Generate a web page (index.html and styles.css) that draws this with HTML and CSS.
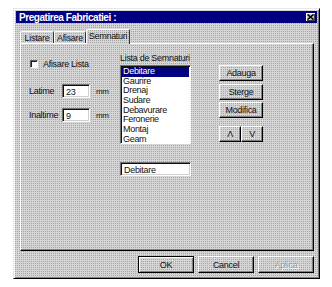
FILE: index.html
```html
<!DOCTYPE html>
<html>
<head>
<meta charset="utf-8">
<link rel="stylesheet" href="styles.css">
</head>
<body>
<div class="dialog">
  <div class="titlebar">
    <span class="title">Pregatirea Fabricatiei :</span>
    <span class="close"><svg width="7" height="6" viewBox="0 0 7 6"><path d="M0.5 0.5 L6.5 5.5 M6.5 0.5 L0.5 5.5" stroke="#000" stroke-width="1.6"/></svg></span>
  </div>
  <div class="tabs">
    <div class="tab t1">Listare</div>
    <div class="tab t2">Afisare</div>
    <div class="tab active">Semnaturi</div>
  </div>
  <div class="panel">
    <div class="col left">
      <div class="check-row"><span class="checkbox"></span><span>Afisare Lista</span></div>
      <div class="field-row r1"><span class="lbl">Latime</span><span class="input small">23</span><span class="unit">mm</span></div>
      <div class="field-row r2"><span class="lbl">Inaltime</span><span class="input small">9</span><span class="unit">mm</span></div>
    </div>
    <div class="col mid">
      <div class="list-label">Lista de Semnaturi</div>
      <div class="listbox">
        <div class="item selected">Debitare</div>
        <div class="item">Gaurire</div>
        <div class="item">Drenaj</div>
        <div class="item">Sudare</div>
        <div class="item">Debavurare</div>
        <div class="item">Feronerie</div>
        <div class="item">Montaj</div>
        <div class="item">Geam</div>
      </div>
      <div class="input wide">Debitare</div>
    </div>
    <div class="col right">
      <div class="btn side">Adauga</div>
      <div class="btn side">Sterge</div>
      <div class="btn side">Modifica</div>
      <div class="arrows">
        <div class="btn arrow">&#923;</div>
        <div class="btn arrow">V</div>
      </div>
    </div>
  </div>
  <div class="buttons">
    <div class="btn main">OK</div>
    <div class="btn main">Cancel</div>
    <div class="btn main disabled">Aplica</div>
  </div>
</div>
</body>
</html>
```
FILE: styles.css
```css
body {
  margin: 0;
  background: #fff;
  font-family: "Liberation Sans", Arial, sans-serif;
  font-size: 9px;
  letter-spacing: -0.3px;
  color: #111;
}

.dialog {
  margin: 8px 0 0 13px;
  width: 307px;
  height: 271px;
  box-sizing: border-box;
  border: 1px solid;
  border-color: #e8e8e8 #000 #000 #e8e8e8;
  box-shadow: inset 1px 1px #fff, inset -1px -1px #808080;
  padding: 2px;
  background: conic-gradient(from 90deg at 1px 1px, #d6d6d6 75%, #a4a4a4 0) 0 0 / 2px 2px;
  display: flex;
  flex-direction: column;
}

.titlebar {
  height: 12px;
  background: #000080;
  display: flex;
  align-items: center;
  justify-content: space-between;
  padding: 0 2px 0 3px;
}

.title {
  color: #fff;
  font-weight: bold;
  font-size: 10px;
  letter-spacing: -0.45px;
}

.close {
  width: 9px;
  height: 8px;
  background: #c8c8c8;
  box-shadow: inset 1px 1px #fff, inset -1px -1px #404040;
  display: flex;
  align-items: center;
  justify-content: center;
}

.close svg { display: block; }

.tabs {
  display: flex;
  align-items: flex-end;
  height: 14px;
  margin: 6px 0 0 4px;
  position: relative;
  z-index: 1;
}

.tab {
  height: 12px;
  box-sizing: border-box;
  border-top: 1px solid #fff;
  border-left: 1px solid #fff;
  border-right: 1px solid #303030;
  border-radius: 2px 2px 0 0;
  display: flex;
  align-items: center;
  justify-content: center;
}

.t1 { width: 34px; }
.t2 { width: 32px; }

.tab.active {
  width: 44px;
  height: 15px;
  margin-bottom: -1px;
  background: conic-gradient(from 90deg at 1px 1px, #d6d6d6 75%, #a4a4a4 0) 0 0 / 2px 2px;
  align-items: flex-start;
  padding-top: 1px;
}

.panel {
  margin-left: 4px;
  width: 294px;
  height: 208px;
  box-sizing: border-box;
  border: 1px solid;
  border-color: #fff #000 #000 #fff;
  box-shadow: inset -1px -1px #808080;
  padding: 10px 0 0 8px;
  display: grid;
  grid-template-columns: 91px 99px 44px;
  align-items: start;
}

.col { display: flex; flex-direction: column; }

.check-row {
  margin-top: 5px;
  height: 10px;
  display: flex;
  align-items: center;
}

.checkbox {
  width: 8px;
  height: 8px;
  margin: 0 5px 0 1px;
  box-sizing: border-box;
  background: #fff;
  border: 1px solid;
  border-color: #606060 #fff #fff #606060;
  box-shadow: inset 1px 1px #202020;
}

.field-row {
  display: flex;
  align-items: center;
  height: 14px;
}

.r1 { margin-top: 15px; }
.r2 { margin-top: 10px; }

.lbl { width: 33px; }

.input {
  box-sizing: border-box;
  background: #fff;
  border: 1px solid;
  border-color: #707070 #fff #fff #707070;
  box-shadow: inset 1px 1px #101010, inset -1px -1px #d0d0d0;
  padding: 2px 0 0 3px;
  height: 14px;
  line-height: 10px;
}

.input.small { width: 28px; }
.unit { margin-left: 6px; font-size: 8px; }

.list-label {
  height: 11px;
  line-height: 9px;
}

.listbox {
  width: 71px;
  height: 79px;
  box-sizing: border-box;
  background: #fff;
  border: 1px solid;
  border-color: #707070 #fff #fff #707070;
  box-shadow: inset 1px 1px #101010;
  padding: 1px 1px 0 1px;
}

.item {
  height: 9.7px;
  line-height: 9.7px;
  padding-left: 1px;
}

.item.selected {
  background: #000080;
  color: #fff;
}

.input.wide {
  width: 71px;
  margin-top: 18px;
}

.right { margin-top: 11px; gap: 2.5px; }

.btn {
  box-sizing: border-box;
  border: 1px solid;
  border-color: #fff #000 #000 #fff;
  box-shadow: inset -1px -1px #808080;
  display: flex;
  align-items: center;
  justify-content: center;
}

.btn.side { height: 16px; }

.arrows {
  display: flex;
  margin-top: 5.5px;
}

.btn.arrow {
  width: 22px;
  height: 16px;
}

.buttons {
  display: flex;
  justify-content: flex-end;
  gap: 4px;
  margin-top: 5px;
  padding-right: 3px;
}

.btn.main {
  width: 56px;
  height: 17px;
}

.btn.main:first-child {
  border-color: #000;
  box-shadow: inset 1px 1px #fff, inset -1px -1px #808080;
}

.btn.disabled {
  color: #9a9a9a;
  text-shadow: 1px 1px #fff;
}
```
